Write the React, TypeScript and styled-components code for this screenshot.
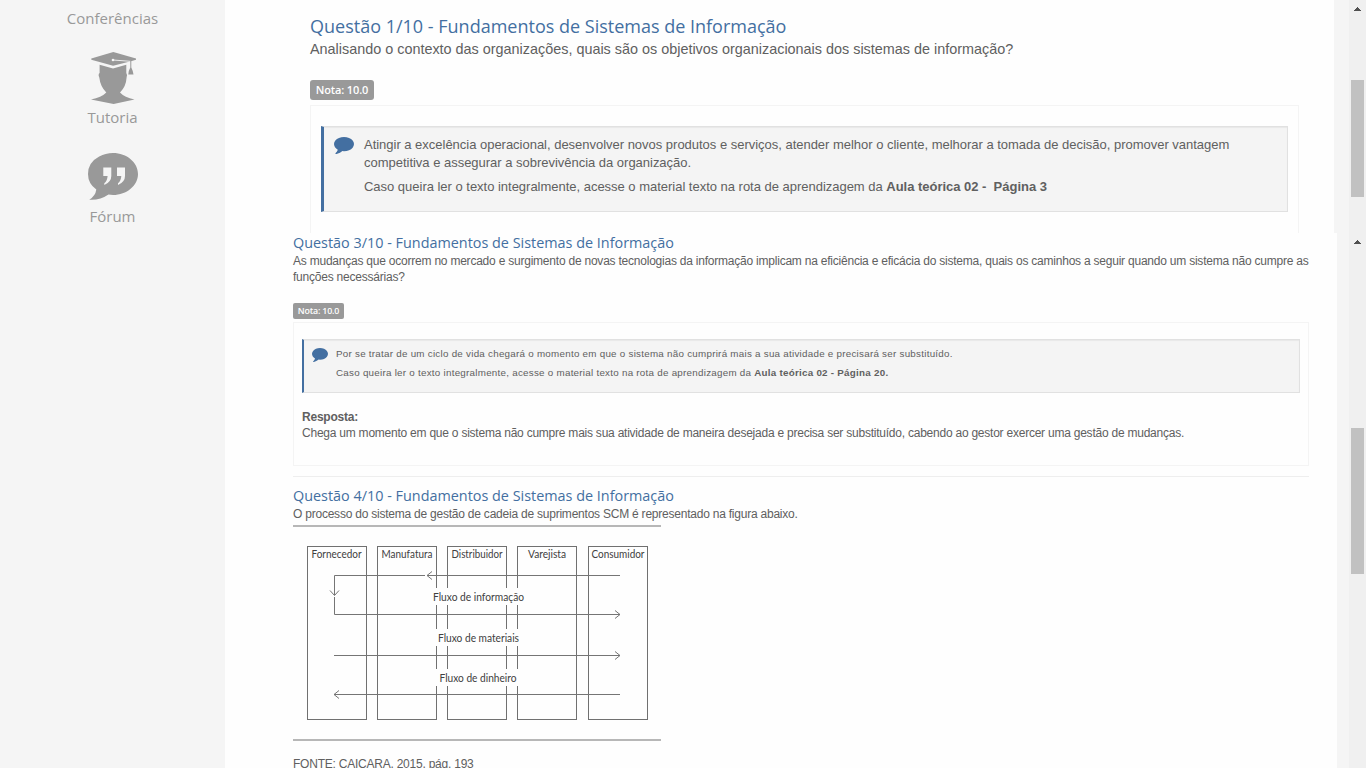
import React from 'react';
import styled, { createGlobalStyle } from 'styled-components';

const GlobalStyle = createGlobalStyle`
  * { box-sizing: border-box; }
  body { margin: 0; overflow: hidden; background: #fefefe; }
  h2, p { margin: 0; font-weight: 400; }
`;

const Page = styled.div`
  display: flex;
  width: 1366px;
  height: 768px;
  overflow: hidden;
  color: #606060;
  font-family: "Liberation Sans", Arial, sans-serif;
`;

const Sidebar = styled.nav`
  display: flex;
  flex-direction: column;
  align-items: center;
  width: 225px;
  padding-top: 8px;
  background: #f5f5f5;
`;

const SideItem = styled.a<{ $gap: number }>`
  display: flex;
  flex-direction: column;
  align-items: center;
  margin-bottom: ${(p) => p.$gap}px;
  color: #999;
  font: 15px/20px "Open Sans", sans-serif;

  svg { display: block; fill: #999; }
`;

const SideLabel = styled.span<{ $top: number }>`
  margin-top: ${(p) => p.$top}px;
`;

const Main = styled.div`
  flex: 1;
  display: flex;
  flex-direction: column;
`;

const Pane = styled.section<{ $height: number }>`
  display: flex;
  height: ${(p) => p.$height}px;
  overflow: hidden;
  background: #f5f5f5;
`;

const Content = styled.div<{ $pad: string; $width: number }>`
  width: ${(p) => p.$width}px;
  padding: ${(p) => p.$pad};
  background: #fefefe;
`;

const ScrollTrack = styled.div`
  display: flex;
  flex-direction: column;
  align-items: center;
  width: 17px;
  margin-left: auto;
  padding: 7px 1px 0 0;
  background: #f0f0f0;

  svg { display: block; }
`;

const ScrollThumb = styled.div<{ $top: number; $height: number }>`
  width: 13px;
  height: ${(p) => p.$height}px;
  margin: ${(p) => p.$top}px 0 0 1px;
  flex: none;
  background: #c1c1c1;
`;

const Title = styled.h2<{ $small?: boolean }>`
  color: #436fa1;
  font: ${(p) => (p.$small ? '14.4px/20px' : '18px/26px')} "Open Sans", sans-serif;
  white-space: nowrap;
`;

const Line = styled.p<{ $size: number; $lh: number; $ls?: number; $top?: number }>`
  margin-top: ${(p) => p.$top ?? 0}px;
  font-size: ${(p) => p.$size}px;
  line-height: ${(p) => p.$lh}px;
  letter-spacing: ${(p) => p.$ls ?? 0}px;
  white-space: pre;
`;

const Badge = styled.span<{ $small?: boolean }>`
  display: block;
  width: ${(p) => (p.$small ? 51 : 64)}px;
  margin-top: ${(p) => (p.$small ? 18 : 21)}px;
  border-radius: ${(p) => (p.$small ? 2 : 3)}px;
  background: #999;
  color: #fff;
  font: 600 ${(p) => (p.$small ? '8.8px/16px' : '11px/20px')} "Open Sans", sans-serif;
  letter-spacing: -0.15px;
  text-align: center;
  white-space: nowrap;
`;

const Card = styled.div<{ $height: number; $pad: string; $top: number }>`
  height: ${(p) => p.$height}px;
  margin-top: ${(p) => p.$top}px;
  padding: ${(p) => p.$pad};
  border: 1px solid #f4f4f4;
`;

const Well = styled.div<{ $small?: boolean }>`
  display: flex;
  align-items: flex-start;
  gap: ${(p) => (p.$small ? 8 : 10)}px;
  height: ${(p) => (p.$small ? 54 : 86)}px;
  padding: ${(p) => (p.$small ? '7px 0 0 8px' : '9px 0 0 10px')};
  border: 1px solid #e1e1e1;
  border-left: ${(p) => (p.$small ? 2 : 3)}px solid #436fa1;
  background: #f4f4f4;
  box-shadow: inset 0 1px 1px rgba(0, 0, 0, 0.05);

  svg { display: block; flex: none; margin-top: 1px; fill: #436fa1; }
`;

const Divider = styled.hr`
  height: 1px;
  margin: 10px 0 9px;
  border: 0;
  background: #eee;
`;

const Figure = styled.svg`
  display: block;
  margin: 3px 0 15px;
  font-family: Lato, sans-serif;
  font-size: 10.5px;
`;

const CommentIcon = ({ width, height }: { width: number; height: number }) => (
  <svg width={width} height={height} viewBox="0 256 1792 1536" preserveAspectRatio="none">
    <path d="M1792 896q0 174-120 321.5t-326 233-450 85.5q-70 0-145-8-198 175-460 242-49 14-114 22h-5q-15 0-27-10.500t-16-27.500v-1q-3-4-.5-12t2-10 4.500-9.500l6-9 7-8.500 8-9q7-8 31-34.500t34.500-38 31-39.500 32.500-51 27-59 26-76q-157-89-247.500-220t-90.500-281q0-174 120-321.500t326-233 450-85.500 450 85.500 326 233 120 321.500z" />
  </svg>
);

const TutorIcon = () => (
  <svg width="48" height="52" viewBox="-2.300 0 48 52">
    <path d="M0 6.500 22 0l22.700 6.500v1.200L40.500 9 21.800 13.800 0 7.800z" />
    <path d="M21.700 8 39 9.300" stroke="#f5f5f5" strokeWidth="0.900" />
    <circle cx="21.700" cy="8" r="1.300" fill="#f5f5f5" />
    <path d="M39 9h1v6.500q1.800 3.500 2.200 7h-5.200q.2-4 2-7z" />
    <path d="M8.300 12.800 21.700 16.500 35 12.800V21q1.300 1.500.3 4.500-.5 9-6.600 15 4.500 5 14.500 7L22.300 52-.3 47.500q10.500-2 15.300-7Q9 34.500 8 25.500 6.500 22.500 8.300 21z" />
  </svg>
);

const ForumIcon = () => (
  <svg width="50" height="48" viewBox="0 0 50 48">
    <path d="M25 0C38.800 0 50 9.400 50 21S38.800 42 25 42q-2.300 0-4.500-.4Q12 47.500 1.300 46.800 7.500 43 8.300 36.600 0 30.500 0 21 0 9.400 11.200 3.500 17.500 0 25 0z" />
    <path d="M15.300 14.500h8v8.500q0 6-7 9v-1.700q3-2.300 3.300-7.300h-4.300zM29 14.500h8v8.500q0 6-7 9v-1.700q3-2.300 3.300-7.300H29z" fill="#f5f5f5" />
  </svg>
);

const ScrollArrow = () => (
  <svg width="7" height="4" viewBox="0 0 7 4" shapeRendering="crispEdges">
    <path d="M3 0h1v1h1v1h1v1h1v1H0V3h1V2h1V1h1z" fill="#505050" />
  </svg>
);

const columns = [
  { x: 14, name: 'Fornecedor', tx: 18.500, w: 50 },
  { x: 84, name: 'Manufatura', tx: 88.500, w: 51 },
  { x: 154, name: 'Distribuidor', tx: 158.500, w: 51 },
  { x: 224, name: 'Varejista', tx: 235, w: 38 },
  { x: 295, name: 'Consumidor', tx: 298.500, w: 53 },
];

const flows = [
  { y: 76, name: 'Fluxo de informação', x: 140, w: 91 },
  { y: 117, name: 'Fluxo de materiais', x: 145, w: 81 },
  { y: 157, name: 'Fluxo de dinheiro', x: 146.500, w: 77 },
];

const SupplyChain = () => (
  <Figure width="368" height="216" viewBox="0 0 368 216">
    <path d="M0 1h368M0 215h368" stroke="#a0a0a0" strokeWidth="1.600" />
    <g fill="none" stroke="#707070">
      {columns.map((c) => (
        <rect key={c.name} x={c.x + 0.5} y="21.500" width="59" height="173" />
      ))}
    </g>
    <g fill="#fefefe">
      {flows.map((f) => (
        <rect key={f.name} x="138" y={f.y - 13} width="95" height="17" />
      ))}
    </g>
    <g fill="none" stroke="#757575">
      <path d="M327 50.500H134M132 50.500H41.500V70M41.500 72V89.500H327M41 130.500H327M327 169.500H41" />
      <path d="M139 46.500l-5 4 5 4M37 65.500l4.500 5 4.500-5M322 85.500l5 4-5 4M322 126.500l5 4-5 4M46 165.500l-5 4 5 4" />
    </g>
    <g fill="#404040">
      {columns.map((c) => (
        <text key={c.name} x={c.tx} y="33" textLength={c.w} lengthAdjust="spacingAndGlyphs">{c.name}</text>
      ))}
      {flows.map((f) => (
        <text key={f.name} x={f.x} y={f.y} textLength={f.w} lengthAdjust="spacingAndGlyphs">{f.name}</text>
      ))}
    </g>
  </Figure>
);

export default function App() {
  return (
    <Page>
      <GlobalStyle />
      <Sidebar>
        <SideItem $gap={24}><SideLabel $top={0}>Conferências</SideLabel></SideItem>
        <SideItem $gap={26}><TutorIcon /><SideLabel $top={3}>Tutoria</SideLabel></SideItem>
        <SideItem $gap={0}><ForumIcon /><SideLabel $top={5}>Fórum</SideLabel></SideItem>
      </Sidebar>
      <Main>
        <Pane $height={233}>
          <Content $width={1109} $pad="13px 35px 0 85px">
            <Title>Questão 1/10 - Fundamentos de Sistemas de Informação</Title>
            <Line $size={14.4} $lh={20}>Analisando o contexto das organizações, quais são os objetivos organizacionais dos sistemas de informação?</Line>
            <Badge>Nota: 10.0</Badge>
            <Card $top={5} $height={160} $pad="20px 10px">
              <Well>
                <CommentIcon width={20} height={17} />
                <div>
                  <Line $size={13} $lh={18} $ls={-0.018}>Atingir a excelência operacional, desenvolver novos produtos e serviços, atender melhor o cliente, melhorar a tomada de decisão, promover vantagem</Line>
                  <Line $size={13} $lh={18} $ls={-0.018}>competitiva e assegurar a sobrevivência da organização.</Line>
                  <Line $size={13} $lh={18} $ls={-0.018} $top={6}>Caso queira ler o texto integralmente, acesse o material texto na rota de aprendizagem da <b>Aula teórica 02 -  Página 3</b></Line>
                </div>
              </Well>
            </Card>
          </Content>
          <ScrollTrack><ScrollArrow /><ScrollThumb $top={69} $height={117} /></ScrollTrack>
        </Pane>
        <Pane $height={535}>
          <Content $width={1112} $pad="0 28px 0 68px">
            <Title $small>Questão 3/10 - Fundamentos de Sistemas de Informação</Title>
            <Line $size={12} $lh={16} $ls={-0.223}>As mudanças que ocorrem no mercado e surgimento de novas tecnologias da informação implicam na eficiência e eficácia do sistema, quais os caminhos a seguir quando um sistema não cumpre as</Line>
            <Line $size={12} $lh={16} $ls={-0.223}>funções necessárias?</Line>
            <Badge $small>Nota: 10.0</Badge>
            <Card $top={3} $height={144} $pad="16px 8px">
              <Well $small>
                <CommentIcon width={16} height={14} />
                <div>
                  <Line $size={9.8} $lh={14} $ls={0.26}>Por se tratar de um ciclo de vida chegará o momento em que o sistema não cumprirá mais a sua atividade e precisará ser substituído.</Line>
                  <Line $size={9.8} $lh={14} $ls={0.26} $top={5}>Caso queira ler o texto integralmente, acesse o material texto na rota de aprendizagem da <b>Aula teórica 02 - Página 20.</b></Line>
                </div>
              </Well>
              <Line $size={12} $lh={16} $ls={-0.232} $top={16}><b>Resposta:</b></Line>
              <Line $size={12} $lh={16} $ls={-0.232}>Chega um momento em que o sistema não cumpre mais sua atividade de maneira desejada e precisa ser substituído, cabendo ao gestor exercer uma gestão de mudanças.</Line>
            </Card>
            <Divider />
            <Title $small>Questão 4/10 - Fundamentos de Sistemas de Informação</Title>
            <Line $size={12} $lh={16} $ls={-0.226}>O processo do sistema de gestão de cadeia de suprimentos SCM é representado na figura abaixo.</Line>
            <SupplyChain />
            <Line $size={12} $lh={16} $ls={-0.23} $top={1}>FONTE: CAICARA, 2015, pág. 193</Line>
          </Content>
          <ScrollTrack><ScrollArrow /><ScrollThumb $top={184} $height={146} /></ScrollTrack>
        </Pane>
      </Main>
    </Page>
  );
}
